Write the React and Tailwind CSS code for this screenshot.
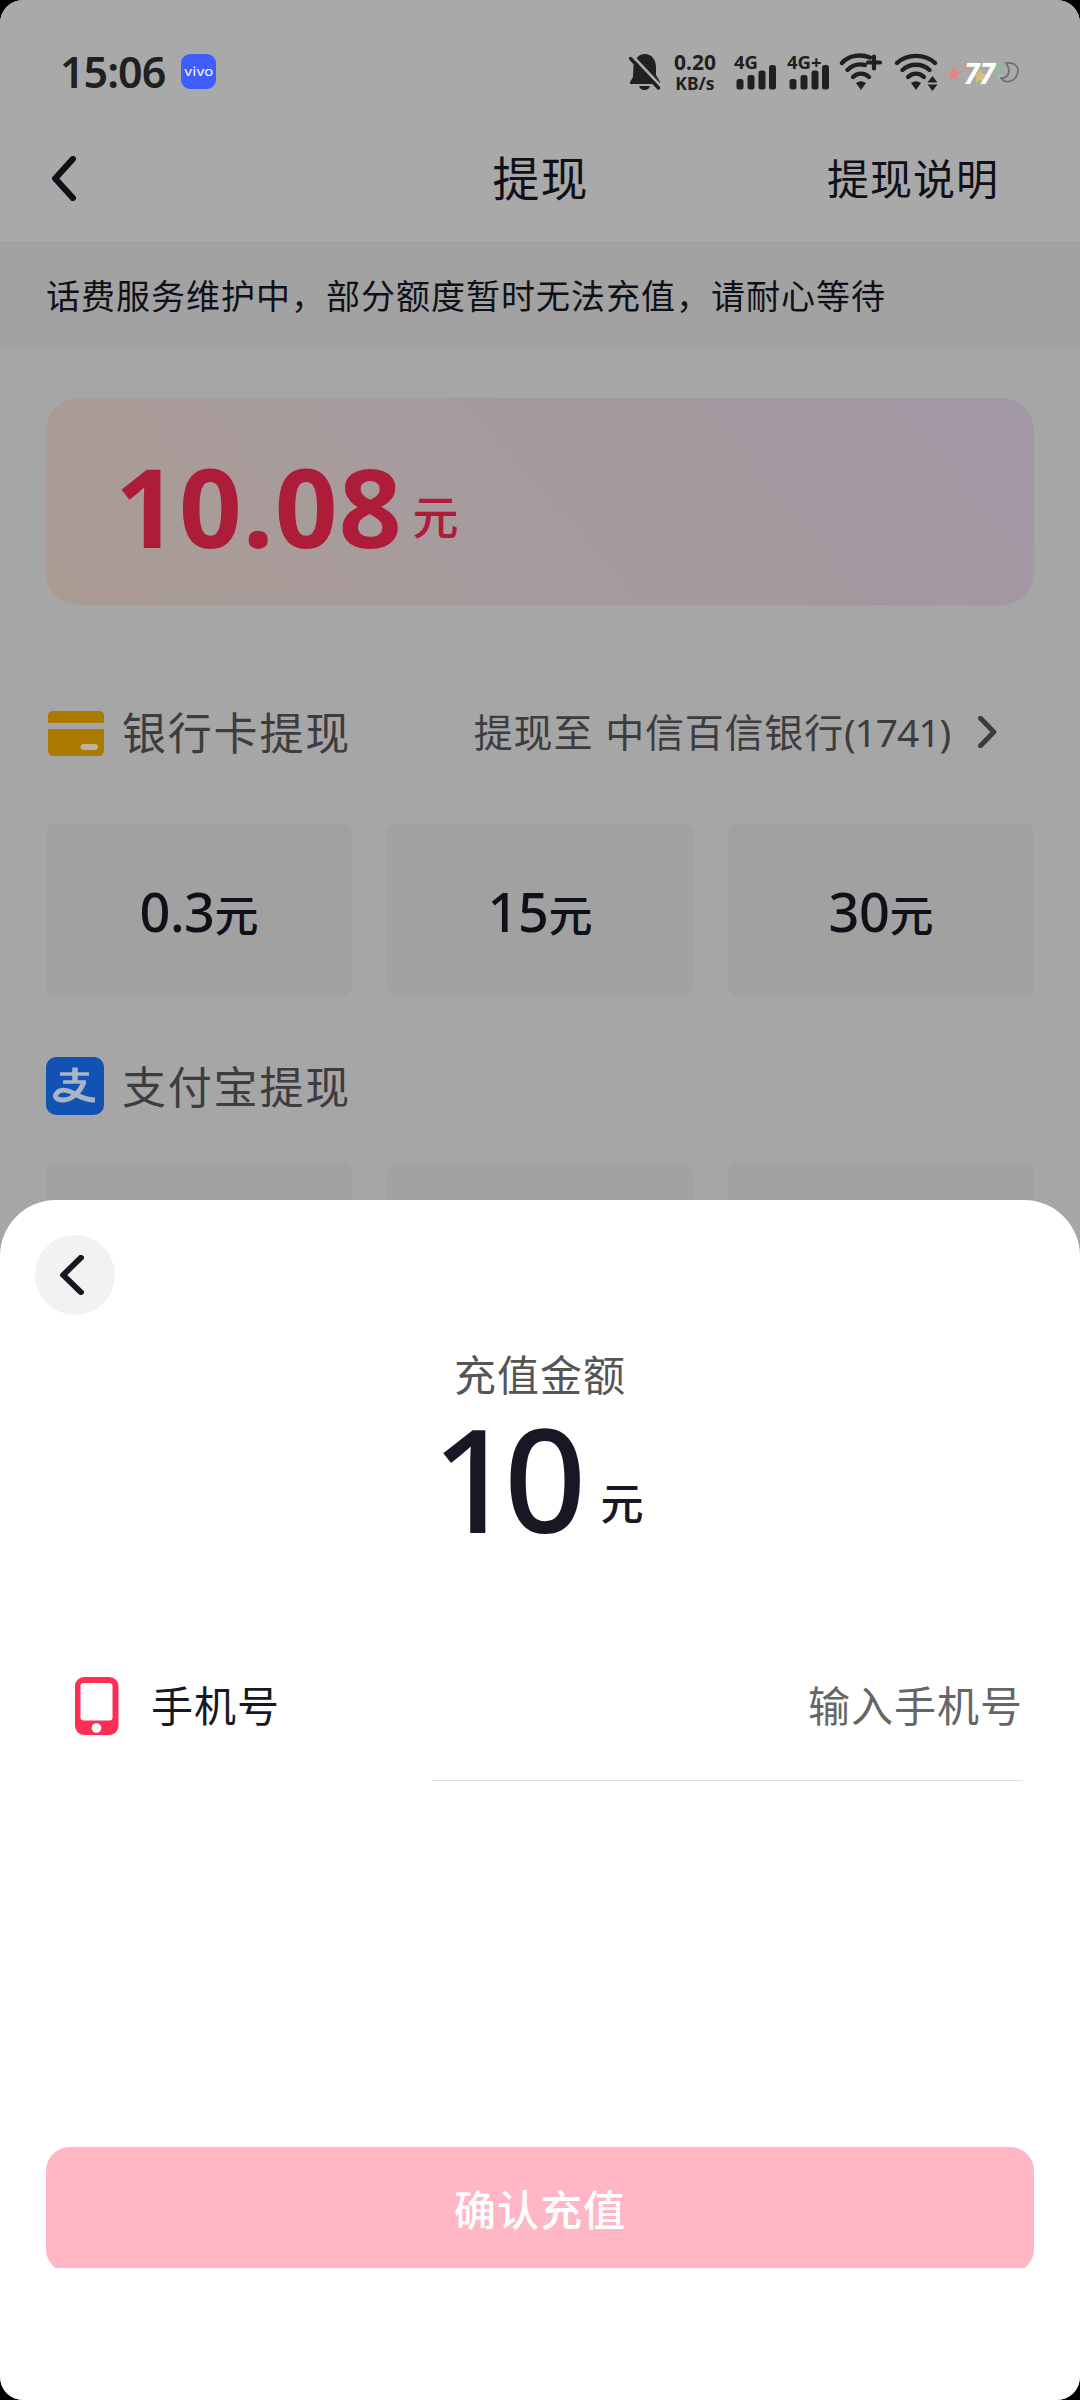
import { useState } from "react";

const bankAmounts = ["0.3", "15", "30"];
const alipayAmounts = ["0.3", "15", "30"];

const STAR = "M0 -6 L1.8 -2 L6 -1.6 L2.9 1.3 L3.8 5.6 L0 3.4 L-3.8 5.6 L-2.9 1.3 L-6 -1.6 L-1.8 -2 Z";

function BellOffIcon() {
  return (
    <svg width="32" height="38" viewBox="0 0 32 38" fill="none">
      <path
        d="M4.5 12 C7 4 11 1 15.5 1 C23 1 27 7 27 14 V22 L31 29 V31 H1 V29 L4 24 Z"
        fill="#202020"
      />
      <path d="M10 33 H21 C20 36 18 37 15.5 37 C13 37 11 36 10 33 Z" fill="#202020" />
      <path d="M3.5 3 L33.5 35" stroke="#a9a9a9" strokeWidth="3" />
      <path d="M1.5 5.5 L29.5 35" stroke="#202020" strokeWidth="3.4" strokeLinecap="round" />
    </svg>
  );
}

function SignalBars() {
  return (
    <svg width="41" height="26" viewBox="0 0 41 26" fill="#202020">
      <rect x="0.5" y="15" width="7" height="10.5" rx="2.5" />
      <rect x="11.5" y="11" width="7" height="14.5" rx="2.5" />
      <rect x="22.5" y="6.5" width="7" height="19" rx="2.5" />
      <rect x="33" y="1" width="7" height="24.5" rx="2.5" />
    </svg>
  );
}

function Signal({ label }) {
  return (
    <div className="flex h-[36px] w-[43px] flex-col">
      <span className="-ml-[2px] h-[10px] whitespace-nowrap text-[18.5px] leading-[15px] font-bold">
        {label}
      </span>
      <SignalBars />
    </div>
  );
}

function WifiIcon({ plus }) {
  return (
    <svg width="44" height="38" viewBox="0 0 44 38" fill="none">
      <g stroke="#202020" strokeWidth="4.4" strokeLinecap="round">
        {plus ? (
          <>
            <path d="M3 10 C10 2 22 1 31 4.5" />
            <path d="M8.5 17 C14 11.5 20 10.5 26 12" />
          </>
        ) : (
          <>
            <path d="M3 10 C13 0.5 31 0.5 41 10" />
            <path d="M8.5 17 C16 10 28 10 35.5 17" />
          </>
        )}
        <path d="M14 24 C18.5 19.5 25.5 19.5 30 24" />
      </g>
      <path d="M17 30 Q22 26.5 27 30 L22 37 Z" fill="#202020" />
      {plus ? (
        <path d="M35 3.5 V15.5 M29 9.5 H41" stroke="#202020" strokeWidth="4.2" strokeLinecap="round" />
      ) : (
        <path d="M38.5 23 L43.5 29.5 H33.5 Z M33.5 31.5 H43.5 L38.5 38 Z" fill="#202020" />
      )}
    </svg>
  );
}

function Battery() {
  return (
    <div className="relative h-[28px] w-[74px]">
      <svg width="74" height="28" viewBox="0 0 74 28" fill="none">
        <path d={STAR} transform="translate(7 15.5) scale(1.15)" fill="#e98282" />
        <path d={STAR} transform="translate(20 9) scale(0.9)" fill="#d69a84" />
        <path d={STAR} transform="translate(33 18) scale(1.15)" fill="#d8c178" />
        <path d={STAR} transform="translate(49 9)" fill="#88c29a" />
        <circle cx="53" cy="19" r="2" fill="#a3c9cc" />
        <path
          d="M59 5 C69 4 73 10 70 17 C67 24 58 26 54 20 C61 21 65 13 59 5 Z"
          stroke="#707070"
          strokeWidth="1.8"
        />
      </svg>
      <span className="absolute left-[17px] top-px text-[28px] leading-[28px] font-bold italic text-white">77</span>
    </div>
  );
}

function StatusBar() {
  return (
    <div className="flex h-[140px] items-center pl-[60px] pr-[59px] pb-[1px] text-[#202020]">
      <span className="mt-[3px] text-[43px] leading-none font-semibold -tracking-[1px]">15:06</span>
      <div className="ml-[16px] mt-[4px] flex size-[35px] items-center justify-center rounded-[9px] bg-[#3f5dfb]">
        <span className="scale-x-125 font-['Inter'] text-[12px] leading-none text-white">vivo</span>
      </div>
      <div className="ml-auto mt-[4px] flex items-center">
        <BellOffIcon />
        <div className="ml-[9px] flex w-[50px] flex-col items-center font-bold">
          <span className="text-[21px] leading-[22px]">0.20</span>
          <span className="text-[17.5px] leading-[20px]">KB/s</span>
        </div>
        <div className="ml-[16px] flex">
          <Signal label="4G" />
          <div className="w-[10px]" />
          <Signal label="4G+" />
        </div>
        <div className="ml-[7px] flex gap-[11px]">
          <WifiIcon plus />
          <WifiIcon />
        </div>
        <div className="ml-[9px]">
          <Battery />
        </div>
      </div>
    </div>
  );
}

function Chevron({ className, flip, width = 6 }) {
  return (
    <svg className={className} viewBox="0 0 24 45" fill="none" preserveAspectRatio="none">
      <path
        d={flip ? "M3 3 L20 22.5 L3 42" : "M21 3 L4 22.5 L21 42"}
        stroke="currentColor"
        strokeWidth={width}
        strokeLinecap="round"
        strokeLinejoin="round"
      />
    </svg>
  );
}

function BankCardIcon() {
  return (
    <svg className="ml-[2px]" width="56" height="45" viewBox="0 0 56 45">
      <path d="M0 12 V5 Q0 0 5 0 H51 Q56 0 56 5 V12 Z" fill="#ab7a00" />
      <path d="M0 18 H56 V39 Q56 45 50 45 H6 Q0 45 0 39 Z" fill="#ab7a00" />
      <rect x="32.5" y="33" width="17.5" height="6" rx="3" fill="#b9b3a3" />
    </svg>
  );
}

function AlipayIcon() {
  return (
    <svg width="58" height="58" viewBox="0 0 58 58" fill="none">
      <rect width="58" height="58" rx="10" fill="#1152b3" />
      <g stroke="#a9b4c6" strokeLinecap="butt">
        <path d="M14 17 H43" strokeWidth="3.5" />
        <path d="M29 10.5 V25" strokeWidth="5.5" />
        <path d="M17 25 H40" strokeWidth="3.5" />
        <path
          d="M38 25 C34 35 26 43 17 43 C10 43 8 39.5 10.5 36.5 C14 32 21 32.5 28 36.5 C36 41 42 43 49 43"
          strokeWidth="5"
        />
      </g>
    </svg>
  );
}

function AmountGrid({ amounts }) {
  return (
    <div className="grid grid-cols-3 gap-[35px]">
      {amounts.map((amount) => (
        <button
          key={amount}
          type="button"
          className="flex h-[173px] items-center justify-center rounded-[11px] bg-[#a1a1a1] leading-none font-medium text-[#101018]"
        >
          <span className="pt-[3px] text-[54px] -tracking-[0.5px]">{amount}</span>
          <span className="pt-[10px] text-[44px]">元</span>
        </button>
      ))}
    </div>
  );
}

function WithdrawPage() {
  return (
    <div className="flex flex-col text-[#101018]">
      <header className="h-[241px] bg-[#a9a9a9]">
        <StatusBar />
        <div className="grid h-[76px] grid-cols-3 items-center pl-[51px] pr-[81px]">
          <Chevron className="h-[45px] w-[25px]" />
          <h1 className="pl-[31px] text-center text-[47px] leading-none tracking-[1px]">提现</h1>
          <span className="pt-[2px] text-right text-[42px] leading-none tracking-[1px]">提现说明</span>
        </div>
      </header>

      <div className="flex h-[109px] items-center bg-[#a2a2a2] pl-[46px] pt-[1px]">
        <p className="whitespace-nowrap text-[34px] leading-none tracking-[1px]">
          话费服务维护中，部分额度暂时无法充值，请耐心等待
        </p>
      </div>

      <main className="flex flex-col px-[46px] pt-[48px]">
        {/* Balance */}
        <div className="flex h-[207px] items-center rounded-[32px] bg-[linear-gradient(50deg,#ab9b93_0%,#a79b9c_35%,#a4989f_70%,#a297a5_100%)] pl-[69px] leading-none text-[#ad1d3a]">
          <span className="mt-[6px] text-[110px] font-bold tracking-[1px]">10.08</span>
          <span className="ml-[10px] mt-[29px] text-[46px] font-medium">元</span>
        </div>

        {/* Bank card */}
        <section className="pt-[88px]">
          <div className="flex h-[80px] items-center text-[#3d3d3f]">
            <BankCardIcon />
            <h2 className="ml-[18px] text-[44px] leading-none tracking-[1.8px]">银行卡提现</h2>
            <span className="ml-auto whitespace-nowrap pb-[3px] text-[39px] leading-none tracking-[0.8px]">
              提现至<span className="ml-[1px]"> 中信百信银行</span>
              <span className="-tracking-[1.1px]">(1741)</span>
            </span>
            <Chevron flip width={6.5} className="ml-[28px] mr-[37px] mb-[2px] h-[32px] w-[19px]" />
          </div>
          <div className="mt-[50px]">
            <AmountGrid amounts={bankAmounts} />
          </div>
        </section>

        {/* Alipay */}
        <section className="pt-[50px]">
          <div className="flex h-[80px] items-center text-[#3d3d3f]">
            <AlipayIcon />
            <h2 className="ml-[18px] pt-[1px] text-[44px] leading-none tracking-[1.8px]">支付宝提现</h2>
          </div>
          <div className="mt-[37px]">
            <AmountGrid amounts={alipayAmounts} />
          </div>
        </section>
      </main>
    </div>
  );
}

function RechargeSheet() {
  const [phone, setPhone] = useState("");

  return (
    <div className="absolute inset-x-0 bottom-0 flex h-[1200px] flex-col rounded-t-[56px] bg-white text-[#171823]">
      <button
        type="button"
        className="ml-[35px] mt-[35px] flex size-[80px] items-center justify-center rounded-full bg-[#f2f2f2] pr-[7px]"
      >
        <Chevron className="h-[40px] w-[25px]" />
      </button>

      <div className="mt-[38px] flex flex-col items-center">
        <p className="text-[42px] leading-[44px] tracking-[1px] text-[#555555]">充值金额</p>
        <div className="flex h-[152px] items-end pr-[5px] font-medium leading-none">
          <span className="text-[144px] -tracking-[10px]">10</span>
          <span className="mb-[24px] ml-[24px] text-[43px]">元</span>
        </div>
      </div>

      <div className="mt-[82px] flex items-center pl-[75px] pr-[57px]">
        <svg width="44" height="58" viewBox="0 0 44 58">
          <rect width="43.5" height="58" rx="9" fill="#fb2f56" />
          <rect x="5.5" y="6" width="32" height="37.5" rx="3" fill="#ffffff" />
          <circle cx="21.5" cy="51" r="4.8" fill="#ffffff" />
        </svg>
        <label className="ml-[32px] w-[281px] text-[42px] leading-[60px] tracking-[1px]">手机号</label>
        <div className="flex h-[150px] flex-1 items-center border-b border-[#dedede]">
          <input
            type="tel"
            value={phone}
            onChange={(e) => setPhone(e.target.value)}
            placeholder="输入手机号"
            className="h-[64px] w-full bg-transparent text-right text-[42px] tracking-[1px] outline-none placeholder:text-[#666666]"
          />
        </div>
      </div>

      <div className="mx-[46px] mt-auto mb-[132px] h-[121px] overflow-hidden">
        <button
          type="button"
          className="h-[126px] w-full rounded-[24px] bg-[#ffb7c6] pb-[1px] text-[42px] font-medium tracking-[1px] text-white"
        >
          确认充值
        </button>
      </div>
    </div>
  );
}

export default function App() {
  return (
    <div className="h-[2400px] w-[1080px] bg-black font-['Noto_Sans','Noto_Sans_CJK_SC',sans-serif]">
      <div className="relative h-full overflow-hidden rounded-[23px] bg-[#a6a6a6]">
        <WithdrawPage />
        <RechargeSheet />
      </div>
    </div>
  );
}
